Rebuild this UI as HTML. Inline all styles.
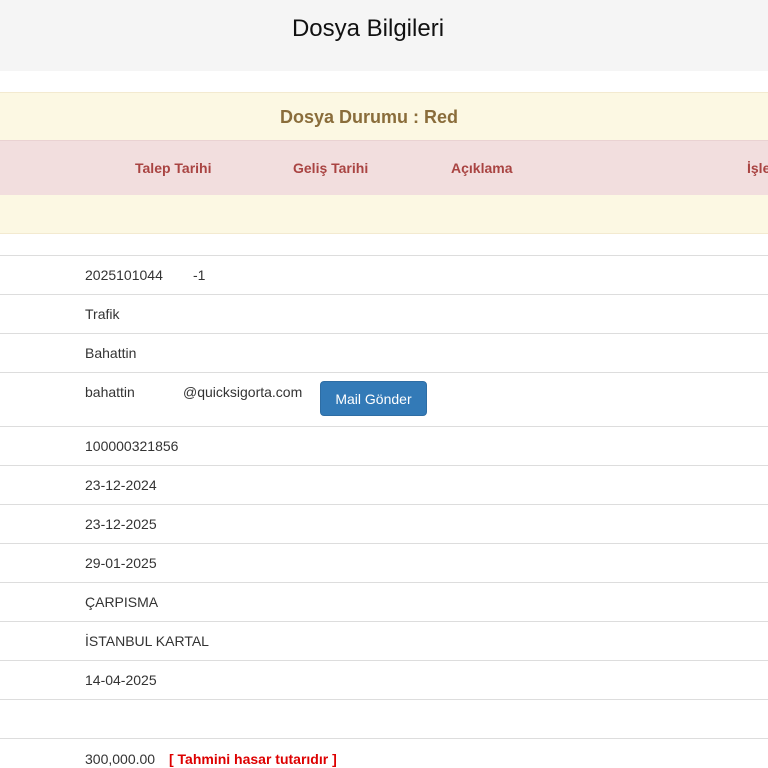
<!DOCTYPE html>
<html><head><meta charset="utf-8"><style>
body{margin:0;width:768px;height:768px;overflow:hidden;background:#fff;font-family:"Liberation Sans",Arial,sans-serif;color:#333;position:relative}
.a{position:absolute}
.hd{left:0;top:0;width:768px;height:71px;background:#f5f5f5}
.t{left:0;width:736px;top:15px;text-align:center;font-size:24px;color:#111}
.y1{left:0;top:92px;width:768px;height:48px;background:#fcf8e3;border-top:1px solid #f3ead0}
.pk{left:0;top:140px;width:768px;height:54px;background:#f2dede;border-top:1px solid #ead2d2;border-bottom:1px solid #e6cfcf}
.y2{left:0;top:195px;width:768px;height:38px;background:#fcf8e3;border-bottom:1px solid #f3ead0}
.ds{left:0;width:738px;top:107px;text-align:center;font-weight:bold;font-size:18px;color:#8a6d3b}
.th{top:160px;font-weight:bold;font-size:14px;color:#a94442}
.ln{left:0;width:768px;height:1px;background:#ddd}
.r{left:85px;font-size:14px;color:#333}
.btn{left:320px;top:381px;width:107px;height:35px;background:#337ab7;border:1px solid #2e6da4;border-radius:4px;color:#fff;font-size:14px;line-height:35px;text-align:center;box-sizing:border-box}
</style></head><body>
<div class="a hd"></div><div class="a t">Dosya Bilgileri</div>
<div class="a y1"></div><div class="a ds">Dosya Durumu : Red</div>
<div class="a pk"></div>
<div class="a th" style="left:135px">Talep Tarihi</div>
<div class="a th" style="left:293px">Geliş Tarihi</div>
<div class="a th" style="left:451px">Açıklama</div>
<div class="a th" style="left:747px">İşlem</div>
<div class="a y2"></div>
<div class="a ln" style="top:255px"></div>
<div class="a ln" style="top:294px"></div>
<div class="a ln" style="top:333px"></div>
<div class="a ln" style="top:372px"></div>
<div class="a ln" style="top:426px"></div>
<div class="a ln" style="top:465px"></div>
<div class="a ln" style="top:504px"></div>
<div class="a ln" style="top:543px"></div>
<div class="a ln" style="top:582px"></div>
<div class="a ln" style="top:621px"></div>
<div class="a ln" style="top:660px"></div>
<div class="a ln" style="top:699px"></div>
<div class="a ln" style="top:738px"></div>
<div class="a r" style="top:267px">2025101044</div>
<div class="a r" style="top:267px;left:193px">-1</div>
<div class="a r" style="top:306px">Trafik</div>
<div class="a r" style="top:345px">Bahattin</div>
<div class="a r" style="top:384px">bahattin</div>
<div class="a r" style="top:384px;left:183px">@quicksigorta.com</div>
<div class="a btn">Mail Gönder</div>
<div class="a r" style="top:438px">100000321856</div>
<div class="a r" style="top:477px">23-12-2024</div>
<div class="a r" style="top:516px">23-12-2025</div>
<div class="a r" style="top:555px">29-01-2025</div>
<div class="a r" style="top:594px">ÇARPISMA</div>
<div class="a r" style="top:633px">İSTANBUL KARTAL</div>
<div class="a r" style="top:672px">14-04-2025</div>
<div class="a r" style="top:751px">300,000.00 <b style="color:#d00;margin-left:10px">[ Tahmini hasar tutarıdır ]</b></div>
</body></html>
